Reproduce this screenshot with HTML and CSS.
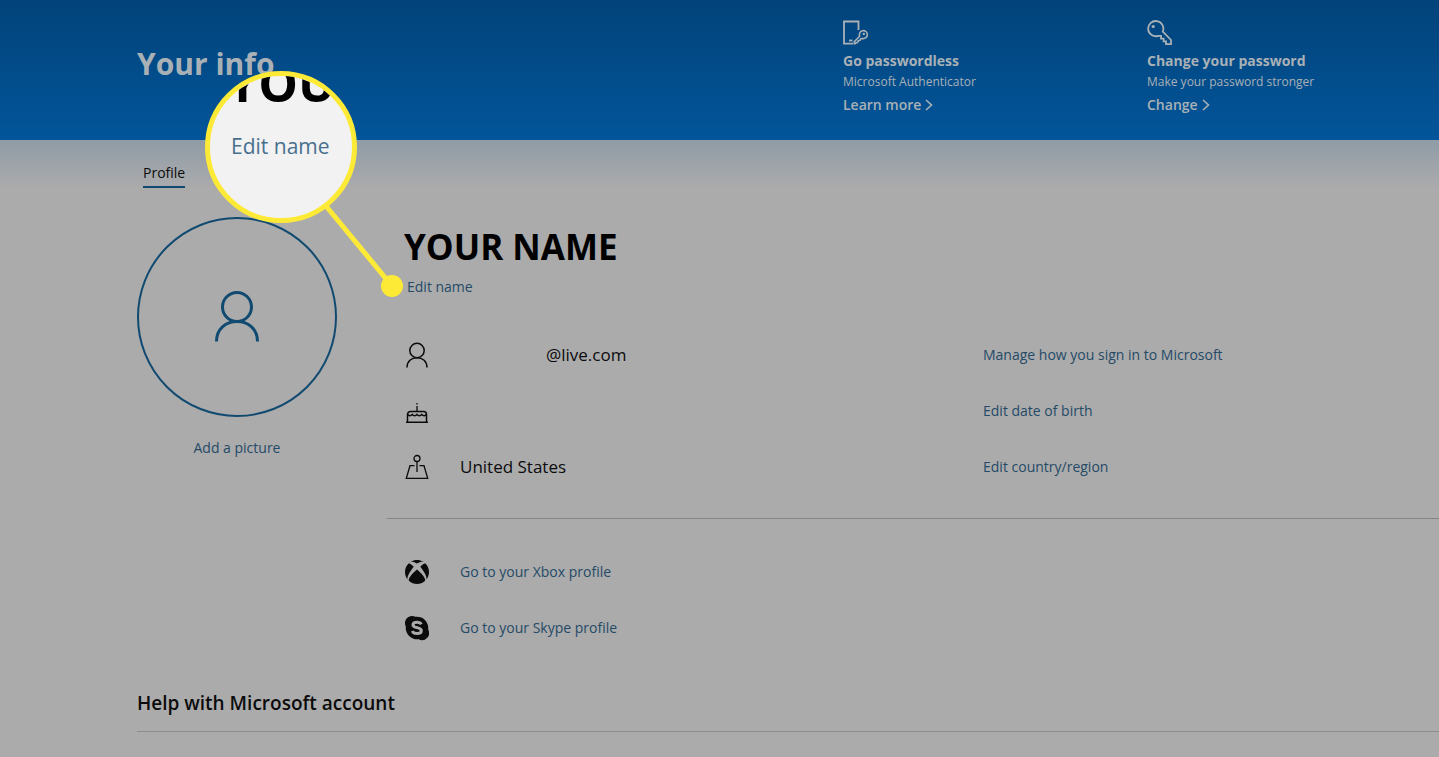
FILE: index.html
```html
<!DOCTYPE html>
<html lang="en">
<head>
<meta charset="utf-8">
<meta name="viewport" content="width=device-width, initial-scale=1">
<title>Your info</title>
<link rel="stylesheet" href="styles.css">
</head>
<body>
<header class="banner">
  <h1 class="banner-title">Your info</h1>
  <div class="banner-actions">
    <section class="action">
      <svg class="action-icon" viewBox="0 0 26 26" fill="none" stroke="currentColor" stroke-width="1.8" aria-hidden="true">
        <path d="M15.500 10V1.500H1V23.700h9"/>
        <path d="M6 20.500h3.500"/>
        <path d="M16.700 16.200a4 4 0 1 1 2.800 2.300l-1.600.2-.9 1.700-1.700.4-.8 1.700-1.500.3-.7.900h-1v-2z" stroke-width="1.600"/>
        <circle cx="20.800" cy="13.900" r="1.200" fill="currentColor" stroke="none"/>
      </svg>
      <h2 class="action-title">Go passwordless</h2>
      <p class="action-text">Microsoft Authenticator</p>
      <a class="action-link" href="#">Learn more
        <svg class="chevron" viewBox="0 0 8 12" fill="none" stroke="currentColor" stroke-width="1.6" aria-hidden="true"><path d="M1 1l5.500 5L1 11"/></svg>
      </a>
    </section>
    <section class="action">
      <svg class="action-icon" viewBox="0 0 26 26" fill="none" stroke="currentColor" stroke-width="1.8" aria-hidden="true">
        <path d="M15.800 11.500A7.600 7.600 0 1 0 11.300 15.800H14v2.900h2.600v2.700h2.400v2.800h5V20z"/>
        <circle cx="6.200" cy="6.500" r="1.600" fill="currentColor" stroke="none"/>
      </svg>
      <h2 class="action-title">Change your password</h2>
      <p class="action-text">Make your password stronger</p>
      <a class="action-link" href="#">Change
        <svg class="chevron" viewBox="0 0 8 12" fill="none" stroke="currentColor" stroke-width="1.6" aria-hidden="true"><path d="M1 1l5.500 5L1 11"/></svg>
      </a>
    </section>
  </div>
</header>

<main class="page">
  <nav class="tabs"><a class="tab" href="#">Profile</a></nav>

  <div class="profile">
    <div class="picture">
      <div class="avatar">
        <svg class="avatar-icon" viewBox="0 0 44 52" fill="none" stroke="currentColor" stroke-width="3" aria-hidden="true">
          <circle cx="22" cy="16" r="14.500"/>
          <path d="M1.500 50.500C1.500 38 10.500 30.500 22 30.500S42.500 38 42.500 50.500"/>
        </svg>
      </div>
      <a class="link" href="#">Add a picture</a>
    </div>

    <div class="details">
      <div class="identity">
        <h2 class="name">YOUR NAME</h2>
        <a class="link edit-name" href="#">Edit name</a>
      </div>

      <ul class="rows">
        <li class="row">
          <svg class="row-icon" viewBox="0 0 24 26" fill="none" stroke="currentColor" stroke-width="1.5" aria-hidden="true">
            <circle cx="12" cy="8.500" r="7.200"/>
            <path d="M2 25.500c0-6.300 4.400-9.800 10-9.800s10 3.500 10 9.800"/>
          </svg>
          <span class="value value-email">@live.com</span>
          <a class="link" href="#">Manage how you sign in to Microsoft</a>
        </li>
        <li class="row">
          <svg class="row-icon" viewBox="0 0 24 26" fill="none" stroke="currentColor" stroke-width="1.5" aria-hidden="true">
            <path d="M1 24.300h22M2.500 24V16.500a3 3 0 0 1 3-3h13a3 3 0 0 1 3 3V24"/>
            <path d="M2.500 16.500c1 1.500 3.500 1.500 4.800 0 1.200 1.500 3.500 1.500 4.700 0 1.200 1.500 3.500 1.500 4.700 0 1.300 1.500 3.800 1.500 4.800 0"/>
            <path d="M12 13.500V8M12 6.500V5" stroke-width="1.300"/>
          </svg>
          <span class="value"></span>
          <a class="link" href="#">Edit date of birth</a>
        </li>
        <li class="row">
          <svg class="row-icon" viewBox="0 0 24 26" fill="none" stroke="currentColor" stroke-width="1.300" aria-hidden="true">
            <circle cx="12" cy="4.500" r="3"/>
            <path d="M12 7.500V18M9.500 11.700H5L1.300 24.300h21.400L19 11.700h-4.500"/>
          </svg>
          <span class="value">United States</span>
          <a class="link" href="#">Edit country/region</a>
        </li>
      </ul>

      <ul class="rows rows-linked">
        <li class="row">
          <svg class="row-icon" viewBox="0 0 24 24" fill="currentColor" aria-hidden="true">
            <path d="M4.102 21.033C6.211 22.881 8.977 24 12 24c3.026 0 5.789-1.119 7.902-2.967 1.877-1.912-4.316-8.709-7.902-11.417-3.582 2.708-9.779 9.505-7.898 11.417zm11.160-14.406c2.500 2.961 7.484 10.313 6.076 12.912C23.002 17.480 24 14.861 24 12.004c0-3.334-1.365-6.362-3.570-8.536 0 0-.027-.022-.082-.042-.063-.022-.152-.045-.281-.045-.592 0-1.985.434-4.805 3.246zM3.654 3.426c-.057.020-.082.041-.086.042C1.365 5.642 0 8.670 0 12.004c0 2.854.998 5.473 2.661 7.533-1.401-2.605 3.579-9.951 6.080-12.910-2.820-2.813-4.216-3.245-4.806-3.245-.131 0-.223.021-.281.046v-.002zM12 3.551S9.055 1.828 6.755 1.746c-.903-.033-1.454.295-1.521.339C7.379.646 9.659 0 11.984 0H12c2.334 0 4.605.646 6.766 2.085-.068-.046-.615-.372-1.520-.339C14.946 1.828 12 3.545 12 3.545v.006z"/>
          </svg>
          <a class="link" href="#">Go to your Xbox profile</a>
        </li>
        <li class="row">
          <svg class="row-icon" viewBox="0 0 24 24" fill="currentColor" aria-hidden="true">
            <path d="M7 0a7 7 0 0 1 3.400.850A11.300 11.300 0 0 1 23.150 13.600 7 7 0 0 1 13.600 23.150 11.300 11.300 0 0 1 .850 10.400 7 7 0 0 1 7 0z"/>
            <path d="M16.200 8.300C15.500 6.900 14 6.300 12 6.300c-2.300 0-4 .9-4 2.600 0 3.700 8.300 1.800 8.300 5.600 0 2-1.900 3.100-4.300 3.100-2.300 0-4-.8-4.700-2.600" class="skype-mark"/>
          </svg>
          <a class="link" href="#">Go to your Skype profile</a>
        </li>
      </ul>
    </div>
  </div>

  <section class="help">
    <h2 class="help-title">Help with Microsoft account</h2>
  </section>
</main>

<div class="callout" aria-hidden="true">
  <svg class="callout-line" viewBox="0 0 200 228">
    <path d="M121 135L187 215" stroke="currentColor" stroke-width="5"/>
    <circle cx="187" cy="215" r="11" fill="currentColor"/>
  </svg>
  <div class="lens">
    <div class="lens-name">YOU</div>
    <div class="lens-link">Edit name</div>
  </div>
</div>
</body>
</html>
```
FILE: styles.css
```css
:root {
  --ink: #0b0b0c;
  --link: #254a66;
  --accent: #114a70;
  --surface: #ababac;
  --pale: #a9b1b6;
  --yellow: #fdea37;
}

* {
  box-sizing: border-box;
}

body {
  margin: 0;
  min-height: 100vh;
  position: relative;
  background: var(--surface);
  color: var(--ink);
  font-family: "Open Sans", "Noto Sans", sans-serif;
  font-size: 14px;
  line-height: 24px;
}

h1, h2, p, ul {
  margin: 0;
  padding: 0;
}

a {
  color: inherit;
  text-decoration: none;
}

.banner {
  display: flex;
  min-height: 140px;
  padding-left: 137px;
  background: linear-gradient(#02437a, #02559a);
  color: var(--pale);
}

.banner-title {
  flex: 1;
  padding-top: 40px;
  font-size: 30px;
  line-height: 48px;
}

.banner-actions {
  display: grid;
  grid-template-columns: 304px 292px;
  padding-top: 20px;
}

.action {
  display: flex;
  flex-direction: column;
  align-items: flex-start;
}

.action-icon {
  width: 26px;
  height: 26px;
  margin-bottom: 4px;
}

.action-title {
  font-size: 14px;
  line-height: 22px;
}

.action-text {
  font-size: 12px;
  line-height: 20px;
}

.action-link {
  display: flex;
  align-items: center;
  gap: 4px;
  font-weight: 600;
  line-height: 26px;
}

.chevron {
  width: 8px;
  height: 12px;
}

.page {
  padding-left: 137px;
  background: linear-gradient(#8f9ca6, var(--surface) 48px);
}

.tabs {
  display: flex;
  padding: 21px 6px 0;
}

.tab {
  height: 27px;
  border-bottom: 2px solid var(--accent);
}

.profile {
  display: flex;
  gap: 50px;
  padding-top: 29px;
}

.picture {
  display: flex;
  flex: 0 0 200px;
  flex-direction: column;
  align-items: center;
  gap: 19px;
}

.avatar {
  display: grid;
  width: 200px;
  height: 200px;
  place-items: center;
  border: 2px solid var(--accent);
  border-radius: 50%;
  color: var(--accent);
}

.avatar-icon {
  width: 44px;
  height: 52px;
}

.link {
  color: var(--link);
}

.details {
  flex: 1;
  min-width: 0;
}

.identity {
  display: flex;
  flex-direction: column;
  align-items: flex-start;
  gap: 4px;
  padding: 6px 0 28px 17px;
}

.name {
  color: #000;
  font-size: 35px;
  line-height: 48px;
}

.edit-name {
  padding-left: 3px;
}

.rows {
  padding: 0 0 23px 18px;
  border-bottom: 1px solid #858587;
  list-style: none;
}

.row {
  display: grid;
  grid-template-columns: 24px 492fr 456fr;
  column-gap: 31px;
  min-height: 56px;
  align-items: center;
}

.row-icon {
  width: 24px;
  height: 26px;
}

.value {
  font-size: 17px;
}

.value-email {
  padding-left: 86px;
}

.rows-linked {
  padding-top: 25px;
  padding-bottom: 31px;
  border: 0;
}

.skype-mark {
  fill: none;
  stroke: var(--surface);
  stroke-width: 3;
}

.help {
  border-bottom: 1px solid #8d8d8f;
}

.help-title {
  padding-bottom: 12px;
  font-size: 19px;
  font-weight: 600;
  line-height: 32px;
}

.callout {
  position: absolute;
  top: 71px;
  left: 205px;
  color: var(--yellow);
}

.callout-line {
  position: absolute;
  top: 0;
  left: 0;
  width: 200px;
  height: 228px;
}

.lens {
  position: relative;
  width: 152px;
  height: 152px;
  overflow: hidden;
  border: 5px solid var(--yellow);
  border-radius: 50%;
  background: #f2f2f3;
}

.lens-name,
.lens-link {
  position: absolute;
  left: 17px;
  color: #000;
  font-size: 50px;
  font-weight: 700;
  line-height: 54px;
  white-space: nowrap;
}

.lens-name {
  top: -20px;
}

.lens-link {
  top: 54px;
  left: 21px;
  color: #47708d;
  font-size: 21px;
  font-weight: 400;
  line-height: 32px;
}
```
